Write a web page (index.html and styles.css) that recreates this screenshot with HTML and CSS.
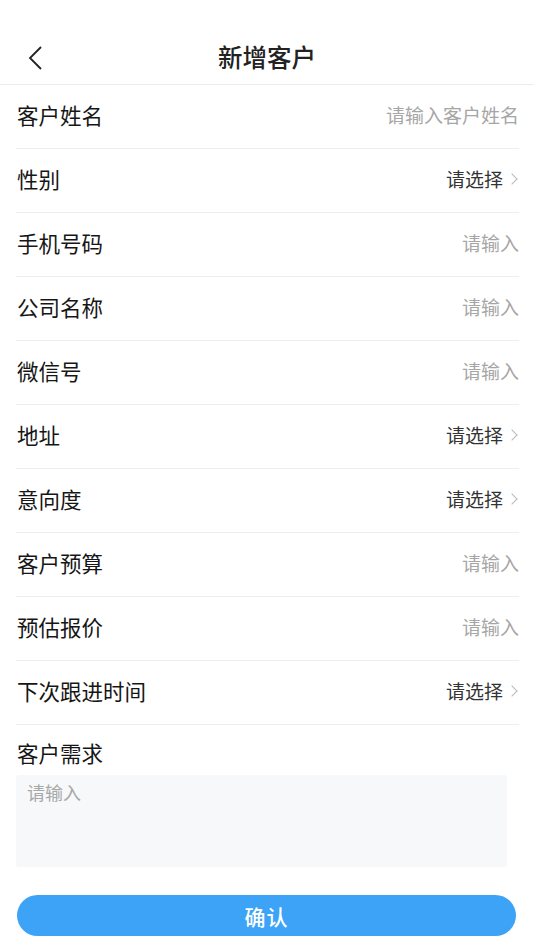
FILE: index.html
```html
<html>
<head>
<meta charset="utf-8">
<link rel="stylesheet" href="styles.css">
</head>
<body>
<div class="page">
  <div class="statusbar"></div>
  <div class="navbar">
    <span class="back">
      <svg width="16" height="24" viewBox="0 0 16 24"><path d="M14 1 L3 12 L14 23" fill="none" stroke="#222" stroke-width="1.8"/></svg>
    </span>
    <span class="title">新增客户</span>
  </div>
  <ul class="form">
    <li class="row"><span class="label">客户姓名</span><span class="ph">请输入客户姓名</span></li>
    <li class="row"><span class="label">性别</span><span class="pick">请选择<i class="arrow"></i></span></li>
    <li class="row"><span class="label">手机号码</span><span class="ph">请输入</span></li>
    <li class="row"><span class="label">公司名称</span><span class="ph">请输入</span></li>
    <li class="row"><span class="label">微信号</span><span class="ph">请输入</span></li>
    <li class="row"><span class="label">地址</span><span class="pick">请选择<i class="arrow"></i></span></li>
    <li class="row"><span class="label">意向度</span><span class="pick">请选择<i class="arrow"></i></span></li>
    <li class="row"><span class="label">客户预算</span><span class="ph">请输入</span></li>
    <li class="row"><span class="label">预估报价</span><span class="ph">请输入</span></li>
    <li class="row"><span class="label">下次跟进时间</span><span class="pick">请选择<i class="arrow"></i></span></li>
  </ul>
  <div class="needs">
    <div class="label">客户需求</div>
    <div class="textarea">请输入</div>
  </div>
  <div class="submit">确认</div>
</div>
</body>
</html>
```
FILE: styles.css
```css
body{margin:0;background:#fff;font-family:"Noto Sans CJK SC","Noto Sans",sans-serif;color:#1c1c1c;}
.page{width:534px;height:950px;overflow:hidden;display:flex;flex-direction:column;}
.statusbar{height:30px;}
.navbar{height:54px;position:relative;display:flex;align-items:center;justify-content:center;border-bottom:1px solid #ececec;}
.navbar .back{position:absolute;left:27px;top:16px;line-height:0;}
.navbar .title{font-size:24.5px;font-weight:500;color:#222;padding-bottom:2px;}
.form{list-style:none;margin:0;padding:0 15px 0 16px;}
.row{height:63px;box-sizing:content-box;padding-bottom:0;display:flex;align-items:center;justify-content:space-between;border-bottom:1.5px solid #eeeeee;}
.row span{position:relative;top:-2px;}
.row .label{font-size:21.5px;color:#161616;padding-left:1px;}
.row .ph{font-size:19px;color:#a6a6a6;}
.row .pick{font-size:19px;color:#333;display:flex;align-items:center;}
.arrow{display:inline-block;width:7px;height:7px;border-top:1.3px solid #bbb;border-right:1.3px solid #bbb;transform:rotate(45deg);margin-left:5px;margin-right:3px;}
.needs{padding:14px 27px 0 16px;}
.needs .label{font-size:21.5px;color:#161616;padding-left:1px;line-height:28px;}
.textarea{margin-top:8px;height:92px;background:#f7f8fa;border-radius:3px;padding:4px 11px;box-sizing:border-box;font-size:18px;color:#a8a8a8;}
.submit{margin:28px 18px 0 17px;height:41px;border-radius:21px;background:#3ca3f6;color:#fff;font-size:21px;font-weight:500;display:flex;align-items:center;justify-content:center;letter-spacing:1px;}
```
